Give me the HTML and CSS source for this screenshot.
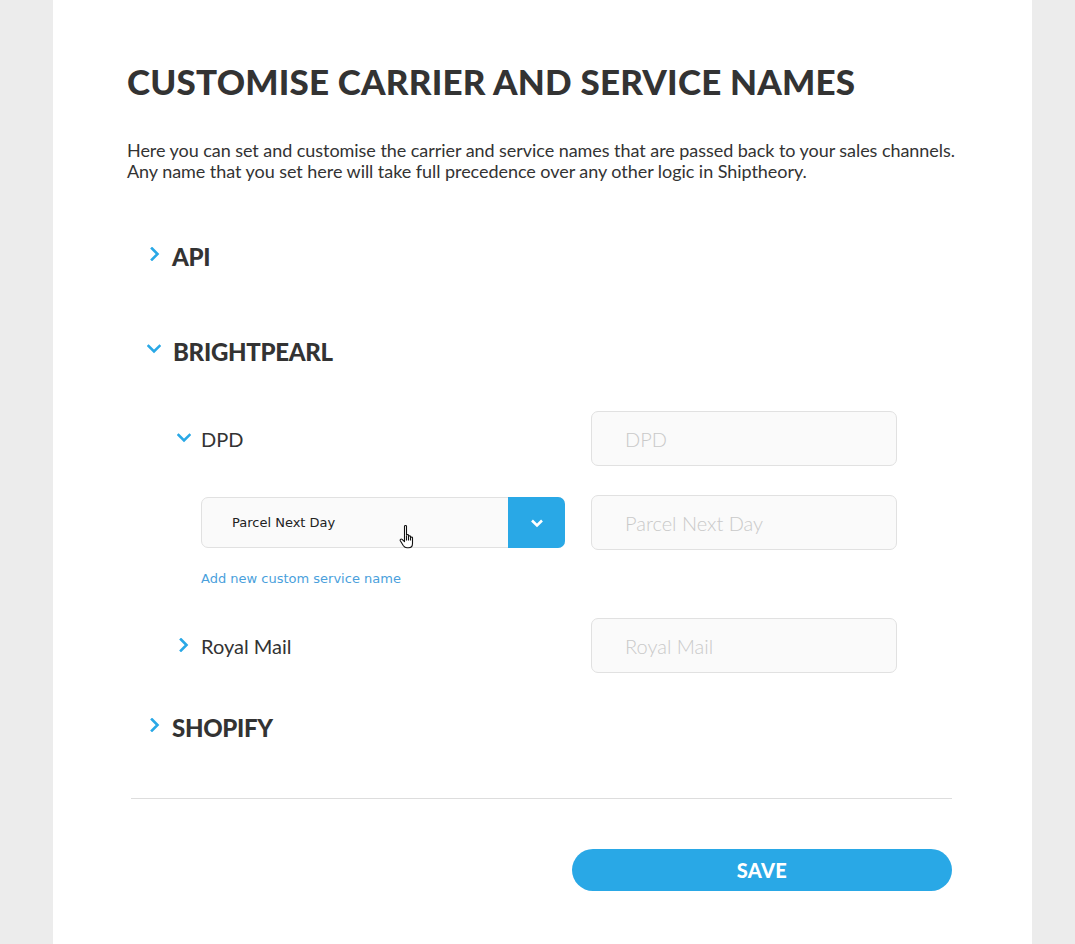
FILE: index.html
```html
<!DOCTYPE html>
<html lang="en">
<head>
<meta charset="utf-8">
<title>Customise carrier and service names</title>
<link rel="stylesheet" href="styles.css">
</head>
<body>
<div class="page">
  <h1 class="title">CUSTOMISE CARRIER AND SERVICE NAMES</h1>
  <p class="intro">Here you can set and customise the carrier and service names that are passed back to your sales channels.<br>Any name that you set here will take full precedence over any other logic in Shiptheory.</p>

  <div class="channels">
    <div class="channel">
      <div class="channel-head">
        <svg class="chev chev-right" viewBox="0 0 10 14"><path d="M2 1.5 L7.5 7 L2 12.5"/></svg>
        <span class="channel-name">API</span>
      </div>
    </div>

    <div class="channel open">
      <div class="channel-head">
        <svg class="chev chev-down" viewBox="0 0 14 10"><path d="M1.5 2 L7 7.5 L12.5 2"/></svg>
        <span class="channel-name">BRIGHTPEARL</span>
      </div>

      <div class="carriers">
        <div class="carrier-row">
          <div class="carrier-label">
            <svg class="chev chev-down small" viewBox="0 0 14 10"><path d="M1.5 2 L7 7.5 L12.5 2"/></svg>
            <span class="carrier-name">DPD</span>
          </div>
          <input class="name-input" type="text" placeholder="DPD">
        </div>

        <div class="service-row">
          <div class="select">
            <span class="select-value">Parcel Next Day</span>
            <span class="select-btn"><svg viewBox="0 0 14 10"><path d="M2 2.5 L7 7.5 L12 2.5"/></svg></span>
            <svg class="cursor" viewBox="0 0 18 25"><path d="M5.5 2.3c0-1.1 2-1.1 2 0v9c0-1 2-1 2 0v1.2c0-1 2-1 2 0v1.2c0-1 2-1 2 0v5.8c0 2.6-1.6 4.3-4 4.3H8c-1.7 0-2.7-.7-3.6-2L1.3 16.8c-.7-1.2.7-2.3 1.8-1.4l2.4 2.3Z"/><path d="M9.5 13v3.5M11.5 14v2.5M7.5 12v4.5"/></svg>
          </div>
          <input class="name-input" type="text" placeholder="Parcel Next Day">
        </div>
        <a class="add-link" href="#">Add new custom service name</a>

        <div class="carrier-row">
          <div class="carrier-label">
            <svg class="chev chev-right small" viewBox="0 0 10 14"><path d="M2 1.5 L7.5 7 L2 12.5"/></svg>
            <span class="carrier-name">Royal Mail</span>
          </div>
          <input class="name-input" type="text" placeholder="Royal Mail">
        </div>
      </div>
    </div>

    <div class="channel">
      <div class="channel-head">
        <svg class="chev chev-right" viewBox="0 0 10 14"><path d="M2 1.5 L7.5 7 L2 12.5"/></svg>
        <span class="channel-name">SHOPIFY</span>
      </div>
    </div>
  </div>

  <hr class="divider">
  <div class="actions">
    <button class="save-btn" type="button">SAVE</button>
  </div>
</div>
</body>
</html>
```

FILE: styles.css
```css
html, body {
  margin: 0;
  padding: 0;
  background: #ececec;
}

body {
  font-family: "Lato", "Liberation Sans", sans-serif;
  color: #333333;
}

.page {
  margin-left: 53px;
  width: 979px;
  min-height: 944px;
  box-sizing: border-box;
  background: #ffffff;
  padding: 60px 80px 0 74px;
}

.title {
  margin: 0;
  font-size: 35px;
  line-height: 42px;
  font-weight: 900;
  letter-spacing: 0.2px;
  color: #333333;
}

.intro {
  margin: 38px 0 0;
  width: 860px;
  font-size: 18px;
  line-height: 21px;
  letter-spacing: -0.05px;
  color: #333333;
}

.channels {
  margin-top: 59px;
  padding-left: 22px;
}

.channel-head {
  display: flex;
  align-items: center;
  height: 30px;
  gap: 12px;
}

.channel + .channel {
  margin-top: 65px;
}

.channel.open + .channel {
  margin-top: 30px;
}

.chev {
  fill: none;
  stroke: #29a8e6;
  stroke-width: 2.6;
  stroke-linecap: square;
}

.chev-right {
  width: 10px;
  height: 14px;
  margin-left: 1px;
  margin-top: -4px;
}

.chev-down {
  width: 14px;
  height: 10px;
  margin-left: -2px;
  margin-top: -4px;
}

.channel-name {
  font-size: 24px;
  font-weight: 900;
  letter-spacing: -0.3px;
  color: #333333;
}

.carriers {
  padding-left: 28px;
  margin-top: 45px;
  padding-bottom: 9px;
}

.carrier-row {
  display: flex;
  align-items: center;
}

.carrier-label {
  display: flex;
  align-items: center;
  gap: 10px;
  flex: 0 0 414px;
}

.chev.small.chev-down {
  margin-left: 0;
  margin-top: -2px;
}

.chev.small.chev-right {
  margin-left: 2px;
  margin-right: 2px;
  margin-top: -2px;
}

.carrier-name {
  font-size: 20px;
  color: #333333;
}

.name-input {
  width: 306px;
  height: 55px;
  box-sizing: border-box;
  border: 1px solid #e1e1e1;
  border-radius: 7px;
  background: #fafafa;
  padding: 0 0 0 33px;
  font-family: "Lato", "Liberation Sans", sans-serif;
  font-size: 20px;
  font-weight: 300;
  color: #333333;
  outline: none;
}

.name-input::placeholder {
  color: #c9c9c9;
}

.service-row {
  display: flex;
  align-items: center;
  margin-top: 29px;
  padding-left: 24px;
}

.select {
  position: relative;
  display: flex;
  width: 364px;
  height: 51px;
  box-sizing: border-box;
  margin-right: 26px;
  border: 1px solid #e1e1e1;
  border-radius: 7px;
  background: #fafafa;
}

.select-value {
  flex: 1;
  display: flex;
  align-items: center;
  padding-left: 30px;
  font-family: "DejaVu Sans", "Verdana", sans-serif;
  font-size: 13px;
  color: #222222;
}

.select-btn {
  width: 57px;
  margin: -1px -1px -1px 0;
  border-radius: 0 7px 7px 0;
  background: #29a8e6;
  display: flex;
  align-items: center;
  justify-content: center;
}

.select-btn svg {
  width: 14px;
  height: 10px;
  fill: none;
  stroke: #ffffff;
  stroke-width: 2.6;
}

.cursor {
  position: absolute;
  left: 197px;
  top: 26px;
  width: 18px;
  height: 25px;
  fill: #ffffff;
  stroke: #111111;
  stroke-width: 1.1;
  stroke-linejoin: round;
}

.add-link {
  display: block;
  margin: 21px 0 0 24px;
  font-family: "DejaVu Sans", "Verdana", sans-serif;
  font-size: 13px;
  color: #4a9fdc;
  text-decoration: none;
}

.add-link + .carrier-row {
  margin-top: 32px;
}

.divider {
  margin: 56px 0 0 4px;
  width: 821px;
  border: 0;
  border-top: 1px solid #dddddd;
}

.actions {
  display: flex;
  justify-content: flex-end;
  margin-top: 50px;
}

.save-btn {
  width: 380px;
  height: 42px;
  border: 0;
  border-radius: 21px;
  background: #29a8e6;
  color: #ffffff;
  font-family: "Lato", "Liberation Sans", sans-serif;
  font-size: 20px;
  font-weight: 900;
  letter-spacing: 0.3px;
}
```
